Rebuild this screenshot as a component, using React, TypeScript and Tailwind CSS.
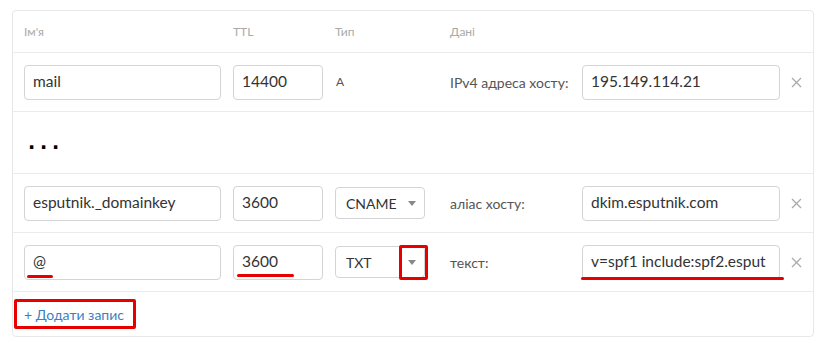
function Field({ value, w, ml = '' }: { value: string; w: string; ml?: string }) {
  return (
    <div className={`${w} ${ml} h-[35px] shrink-0 rounded-[4px] border border-[#d4d4d4] bg-white px-[8px] flex items-center text-[15.5px] text-[#333] overflow-hidden whitespace-nowrap`}>
      {value}
    </div>
  )
}

function Select({ value, marked = false }: { value: string; marked?: boolean }) {
  return (
    <div className="relative ml-3 w-[90px] h-[32px] shrink-0 rounded-[4px] border border-[#d4d4d4] bg-white pl-[10px] pr-[8px] flex items-center justify-between text-[14px] text-[#333]">
      <span>{value}</span>
      <span className="w-0 h-0 border-l-[4px] border-r-[4px] border-t-[5px] border-l-transparent border-r-transparent border-t-[#888]" />
      {marked && (
        <div className="absolute right-[-4px] top-[-2px] w-[29px] h-[35px] border-[3px] border-[#e60000] rounded-[2px]" />
      )}
    </div>
  )
}

function Close() {
  return (
    <div className="flex-1 flex justify-center">
      <svg width="11" height="11" viewBox="0 0 11 11" className="text-[#aaa]">
        <path d="M1 1L10 10M10 1L1 10" stroke="currentColor" strokeWidth="1.3" />
      </svg>
    </div>
  )
}

function Underline({ className }: { className: string }) {
  return <div className={`absolute h-[3px] rounded-full bg-[#e60000] ${className}`} />
}

export default function App() {
  return (
    <div className="min-h-screen bg-white pt-[10px] pl-[12px] font-['Lato','Open_Sans',sans-serif]">
      <div className="w-[802px] rounded-[4px] border border-[#e8e8e8] bg-white">
        <div className="h-[42px] flex items-center pl-[11px] border-b border-[#ebebeb] text-[12px] text-[#aaa]">
          <div className="w-[197px]">Ім'я</div>
          <div className="ml-3 w-[90px]">TTL</div>
          <div className="ml-3 w-[90px]">Тип</div>
          <div className="ml-[25px]">Дані</div>
        </div>

        <div className="h-[59px] flex items-center pl-[11px] border-b border-[#ebebeb]">
          <Field value="mail" w="w-[197px]" />
          <Field value="14400" w="w-[90px]" ml="ml-3" />
          <div className="ml-3 w-[90px] pl-[1px] text-[12px] text-[#555]">A</div>
          <div className="ml-[25px] w-[132px] text-[14px] text-[#555]">IPv4 адреса хосту:</div>
          <Field value="195.149.114.21" w="w-[198px]" />
          <Close />
        </div>

        <div className="h-[62px] flex items-center pl-[15px] border-b border-[#ebebeb] font-['DejaVu_Sans',sans-serif] text-[19px] font-bold text-black tracking-[4.8px] leading-none pb-[1px]">
          ...
        </div>

        <div className="h-[59px] flex items-center pl-[11px] border-b border-[#ebebeb]">
          <Field value="esputnik._domainkey" w="w-[197px]" />
          <Field value="3600" w="w-[90px]" ml="ml-3" />
          <Select value="CNAME" />
          <div className="ml-[25px] w-[132px] text-[14px] text-[#555]">аліас хосту:</div>
          <Field value="dkim.esputnik.com" w="w-[198px]" />
          <Close />
        </div>

        <div className="relative h-[59px] flex items-center pl-[11px] border-b border-[#ebebeb]">
          <Field value="@" w="w-[197px]" />
          <Field value="3600" w="w-[90px]" ml="ml-3" />
          <Select value="TXT" marked />
          <div className="ml-[25px] w-[132px] text-[14px] text-[#555]">текст:</div>
          <Field value="v=spf1 include:spf2.esput" w="w-[198px]" />
          <Close />
          <Underline className="left-[14px] top-[42px] w-[26px]" />
          <Underline className="left-[224px] top-[41px] w-[57px]" />
          <Underline className="left-[568px] top-[44px] w-[203px]" />
        </div>

        <div className="h-[44px] flex items-center pl-[1px]">
          <div className="h-[30px] flex items-center border-[3px] border-[#e60000] rounded-[2px] pl-[7px] pr-[9px] text-[14px] text-[#3d7fc1]">
            + Додати запис
          </div>
        </div>
      </div>
    </div>
  )
}
